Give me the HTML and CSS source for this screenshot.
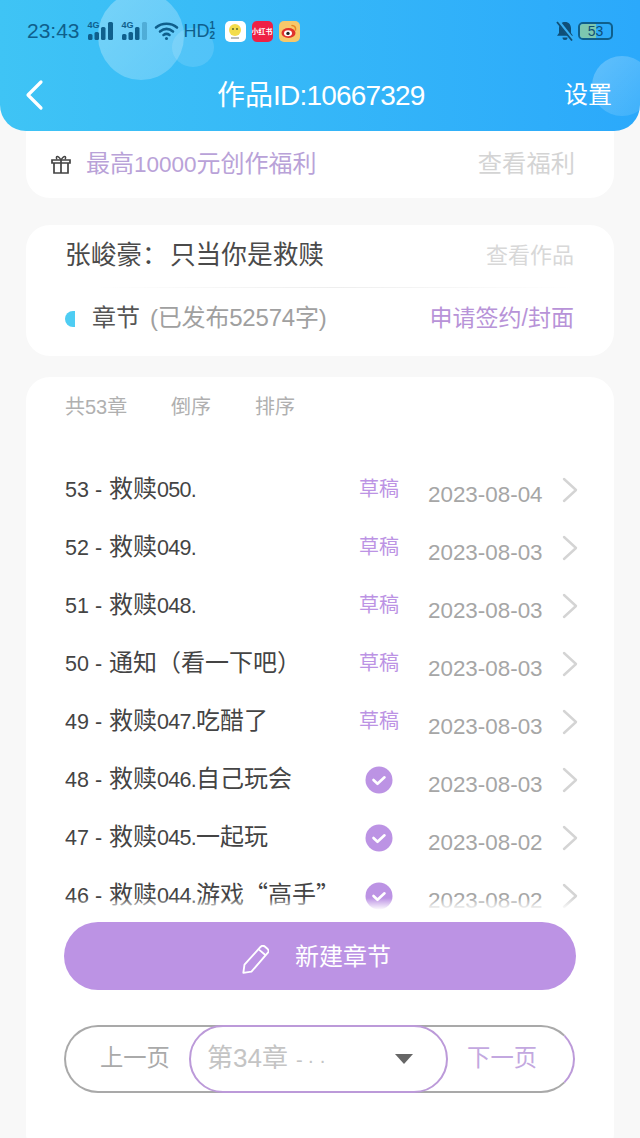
FILE: index.html
```html
<!DOCTYPE html>
<html lang="zh">
<head>
    <meta charset="UTF-8">
    <meta name="viewport" content="width=device-width, initial-scale=1.0">
    <title>作品ID:10667329</title>
    <link rel="stylesheet" href="styles.css">
</head>
<body>
    <div class="page">
        <header class="topbar">
            <span class="bubble bubble-big"></span>
            <span class="bubble bubble-small"></span>
            <span class="bubble bubble-right"></span>
            <div class="status">
                <div class="status-left">
                    <span class="clock">23:43</span>
                    <span class="net"><i class="net-label">4G</i>
                        <svg width="26" height="18" viewBox="0 0 26 18"><rect x="0" y="12" width="4.500" height="6" rx="1.500"/><rect x="6.500" y="10" width="4.500" height="8" rx="1.500"/><rect x="13" y="5" width="4.500" height="13" rx="1.500"/><rect x="20" y="0" width="5" height="18" rx="1.500"/></svg>
                    </span>
                    <span class="net"><i class="net-label">4G</i>
                        <svg width="26" height="18" viewBox="0 0 26 18"><rect x="0" y="12" width="4.500" height="6" rx="1.500"/><rect x="6.500" y="10" width="4.500" height="8" rx="1.500"/><rect x="13" y="5" width="4.500" height="13" rx="1.500"/><rect x="20" y="0" width="5" height="18" rx="1.500" opacity="0.3"/></svg>
                    </span>
                    <svg class="wifi" width="25" height="20" viewBox="0 0 25 20" fill="none" stroke="#0f5f8c" stroke-width="2.600" stroke-linecap="round"><path d="M2 6.500C8 1.500 17 1.500 23 6.500"/><path d="M6 10.500C10 7.300 15 7.300 19 10.500"/><path d="M9.500 14C11.200 12.800 13.800 12.800 15.500 14"/><circle cx="12.500" cy="17.500" r="1.500" fill="#0f5f8c" stroke="none"/></svg>
                    <span class="hd">HD</span>
                    <span class="sim"><i>1</i><i>2</i></span>
                    <span class="app app-qq">
                        <svg width="20" height="20" viewBox="0 0 20 20"><circle cx="10" cy="9" r="6" fill="#f3dc4c"/><circle cx="8" cy="8" r="1" fill="#5b6b2a"/><circle cx="12" cy="8" r="1" fill="#5b6b2a"/><path d="M6 17h8" stroke="#777" stroke-width="1"/></svg>
                    </span>
                    <span class="app app-red">小红书</span>
                    <span class="app app-weibo">
                        <svg width="20" height="20" viewBox="0 0 20 20"><ellipse cx="9.500" cy="12" rx="7" ry="5" fill="#e0332c"/><ellipse cx="9" cy="12.200" rx="4" ry="3" fill="#fff"/><circle cx="9" cy="12.400" r="1.700" fill="#222"/><path d="M13 4.500c2.500 0 4 1.800 3.500 4.500" fill="none" stroke="#e8871e" stroke-width="1.500" stroke-linecap="round"/></svg>
                    </span>
                </div>
                <div class="status-right">
                    <svg width="20" height="20" viewBox="0 0 20 20"><path d="M10 1c3.800 0 6 2.700 6 6.500v4.500l2 2.800H2L4 12V7.500C4 3.700 6.200 1 10 1z" fill="#0f4f78"/><path d="M7.500 16.500h5a2.500 2.500 0 0 1-5 0z" fill="#0f4f78"/><path d="M3 0l15 19" stroke="#36aef2" stroke-width="3.500"/><path d="M2 1l15 18.500" stroke="#0f4f78" stroke-width="1.800"/></svg>
                    <span class="battery"><span class="battery-level"></span><span class="battery-num">53</span></span>
                </div>
            </div>
            <div class="navbar">
                <svg class="back" width="20" height="32" viewBox="0 0 20 32" fill="none" stroke="#fff" stroke-width="3.200" stroke-linecap="round" stroke-linejoin="round"><path d="M17 3L4 16l13 13"/></svg>
                <h1 class="nav-title">作品<span class="nav-id">ID:10667329</span></h1>
                <span class="nav-action">设置</span>
            </div>
        </header>

        <section class="card card-welfare">
            <svg class="gift" width="22" height="22" viewBox="0 0 22 22" fill="none" stroke="#444" stroke-width="1.700"><path d="M2 7h18v3H2zM4 10v10h14V10M11 7v13"/><path d="M11 7C8 2 5 3 7 6.500M11 7c3-5 6-4 4-.5" stroke-width="1.400"/></svg>
            <span class="welfare-text">最高<span class="digits">10000</span>元创作福利</span>
            <span class="link-grey">查看福利</span>
        </section>

        <section class="card card-book">
            <div class="book-row">
                <span class="book-title">张峻豪： 只当你是救赎</span>
                <span class="link-small">查看作品</span>
            </div>
            <div class="book-line"></div>
            <div class="book-row">
                <span class="half-dot"></span>
                <span class="chapter-label">章节</span>
                <span class="chapter-count">(已发布52574字)</span>
                <span class="apply">申请签约/封面</span>
            </div>
        </section>

        <section class="card card-list">
            <div class="list-tools">
                <span class="tool-count">共53章</span>
                <span class="tool-btn">倒序</span>
                <span class="tool-btn">排序</span>
            </div>
            <ul class="chapters" id="chapters"></ul>
            <button class="new-chapter" type="button">
                <svg width="27" height="29" viewBox="3 3 23 25" fill="none" stroke="#fff" stroke-width="1.600" stroke-linejoin="round"><path d="M4 27l1-7L19 4.500c1-1 2.500-1 3.500-.2l2.500 2.200c1 1 1 2.300 0 3.300L11 26z"/><path d="M17.500 7l6 5"/></svg>
                <span class="new-label">新建章节</span>
            </button>
            <div class="pager">
                <span class="pager-prev">上一页</span>
                <div class="pager-select">
                    <span class="pager-current">第34章<span class="pager-more">-··</span></span>
                    <span class="pager-arrow"></span>
                </div>
                <span class="pager-next">下一页</span>
            </div>
        </section>
    </div>

    <script>
        const chapters = [
            ["53", "救赎050.", "草稿", "2023-08-04"],
            ["52", "救赎049.", "草稿", "2023-08-03"],
            ["51", "救赎048.", "草稿", "2023-08-03"],
            ["50", "通知（看一下吧）", "草稿", "2023-08-03"],
            ["49", "救赎047.吃醋了", "草稿", "2023-08-03"],
            ["48", "救赎046.自己玩会", "", "2023-08-03"],
            ["47", "救赎045.一起玩", "", "2023-08-02"],
            ["46", "救赎044.游戏“高手”", "", "2023-08-02"],
        ];

        const checkIcon = '<svg width="28" height="28" viewBox="0 0 28 28"><circle cx="14" cy="14" r="13.500" fill="#bc93e4"/><path d="M8.500 14l4 3.800 7-6.500" fill="none" stroke="#fff" stroke-width="2.600" stroke-linecap="round" stroke-linejoin="round"/></svg>';
        const arrowIcon = '<svg class="row-arrow" width="16" height="26" viewBox="0 0 16 26" fill="none" stroke="#d4d4d4" stroke-width="2.400" stroke-linecap="round" stroke-linejoin="round"><path d="M2 2l12 11L2 24"/></svg>';

        const list = document.getElementById('chapters');
        for (const [num, name, state, date] of chapters) {
            const li = document.createElement('li');
            li.className = 'chapter';
            const status = state ? `<span class="draft">${state}</span>` : checkIcon;
            // the digits in a title are set tighter than the Chinese around them
            const title = name.replace(/[0-9.]+/g, m => `<span class="name-digits">${m}</span>`);
            li.innerHTML = `<span class="chapter-name"><span class="chapter-num">${num} -</span>${title}</span>
                <span class="chapter-state">${status}</span>
                <span class="chapter-date">${date}</span>${arrowIcon}`;
            list.appendChild(li);
        }
    </script>
</body>
</html>
```

FILE: styles.css
```css
* {
    box-sizing: border-box;
}
html, body {
    margin: 0;
    height: 100%;
}
body {
    font-family: "Liberation Sans", "Noto Sans CJK SC", sans-serif;
    background-color: #f8f8f8;
    overflow: hidden;
}
.page {
    height: 1138px;
    overflow: hidden;
}
.topbar {
    position: relative;
    height: 131px;
    padding: 0 26px 0 24px;
    border-radius: 0 0 26px 26px;
    background: linear-gradient(90deg, #3fc4f5 0%, #2ba9fb 100%);
    overflow: hidden;
}
.bubble {
    position: absolute;
    border-radius: 50%;
    background: rgba(255, 255, 255, 0.22);
}
.bubble-big {
    left: 98px;
    top: -8px;
    width: 86px;
    height: 88px;
    background: linear-gradient(135deg, rgba(255,255,255,0.3), rgba(255,255,255,0.2));
}
.bubble-small {
    left: 172px;
    top: 28px;
    width: 42px;
    height: 39px;
    background: rgba(255, 255, 255, 0.13);
}
.bubble-right {
    left: 592px;
    top: 56px;
    width: 60px;
    height: 60px;
    background: linear-gradient(135deg, rgba(255,255,255,0.25), rgba(255,255,255,0.08));
}
.status {
    position: relative;
    display: flex;
    justify-content: space-between;
    align-items: center;
    height: 62px;
    padding-left: 3px;
}
.status-left {
    display: flex;
    align-items: center;
    color: #0f5f8c;
}
.clock {
    font-size: 21px;
    margin-right: 8px;
}
.net {
    position: relative;
    display: flex;
    width: 27px;
    margin-right: 7px;
}
.net + .net {
    margin-right: 5px;
}
.net svg {
    fill: #0f5f8c;
}
.net-label {
    position: absolute;
    left: 0;
    top: -2px;
    font-size: 9px;
    font-weight: bold;
    font-style: normal;
}
.hd {
    font-size: 18px;
    margin-left: 5px;
}
.sim {
    display: flex;
    flex-direction: column;
    width: 9px;
    margin-right: 6px;
    font-size: 10px;
    line-height: 10px;
    font-weight: bold;
}
.sim i {
    font-style: normal;
}
.app {
    display: flex;
    justify-content: center;
    align-items: center;
    width: 21px;
    height: 21px;
    margin-right: 6px;
    border-radius: 5px;
}
.app-qq {
    background-color: #fff;
}
.app-red {
    background-color: #ee2145;
    color: #fff;
    font-size: 7px;
    white-space: nowrap;
    font-weight: bold;
}
.app-weibo {
    background-color: #f7c86a;
}
.status-right {
    display: flex;
    align-items: center;
    gap: 3px;
    margin-right: 1px;
}
.battery {
    position: relative;
    display: flex;
    justify-content: center;
    align-items: center;
    width: 35px;
    height: 18px;
    border: 2px solid #0f5f8c;
    border-radius: 5px;
    overflow: hidden;
}
.battery-level {
    position: absolute;
    left: 0;
    top: 0;
    bottom: 0;
    width: 53%;
    background-color: #7cc7b0;
}
.battery-num {
    position: relative;
    font-size: 14px;
    color: #0f4f78;
}
.navbar {
    position: relative;
    display: flex;
    justify-content: space-between;
    align-items: center;
    height: 66px;
}
.nav-title {
    position: absolute;
    left: 193px;
    margin: 0;
    padding-bottom: 4px;
    font-size: 28px;
    font-weight: normal;
    color: #fff;
    white-space: nowrap;
}
.nav-id {
    letter-spacing: -0.8px;
}
.nav-action {
    margin-right: 2px;
    padding-bottom: 5px;
    font-size: 24px;
    color: #fff;
}
.card {
    margin: 0 26px;
    background-color: #fff;
    border-radius: 24px;
}
.card-welfare {
    display: flex;
    align-items: center;
    height: 67px;
    padding: 0 39px 6px 24px;
    border-radius: 0 0 24px 24px;
}
.gift {
    margin-right: 14px;
    margin-top: 4px;
}
.welfare-text {
    flex: 1;
    font-size: 24px;
    color: #b9a2d8;
}
.digits {
    font-size: 22.500px;
}
.link-grey {
    font-size: 24.300px;
    color: #d4d4d4;
}
.card-book {
    margin-top: 27px;
    height: 131px;
    padding: 0 40px 0 39px;
}
.book-row {
    display: flex;
    align-items: center;
    height: 62px;
    padding-bottom: 7px;
}
.book-title {
    flex: 1;
    font-size: 25.700px;
    word-spacing: -5px;
    color: #4a4a4a;
}
.link-small {
    font-size: 22px;
    color: #d8d8d8;
}
.book-line {
    height: 1px;
    margin: 0 0 0 30px;
    background: linear-gradient(90deg, #fff, #eee 50%, #fff);
}
.half-dot {
    width: 10px;
    height: 16px;
    margin-top: 6px;
    margin-right: 17px;
    border-radius: 8px 0 0 8px;
    background-color: #4ecdf3;
}
.chapter-label {
    font-size: 24px;
    color: #555;
}
.chapter-count {
    flex: 1;
    margin-left: 10px;
    font-size: 24px;
    color: #a0a0a0;
    letter-spacing: -0.200px;
    white-space: nowrap;
}
.apply {
    font-size: 23px;
    color: #b893d8;
    white-space: nowrap;
}
.card-list {
    position: relative;
    height: 780px;
    margin-top: 21px;
    padding: 0 36px 0 38px;
}
.list-tools {
    display: flex;
    align-items: center;
    height: 60px;
    padding: 0 0 4px 1px;
    font-size: 20px;
    color: #b0b0b0;
}
.tool-count {
    width: 106px;
}
.tool-btn {
    width: 84px;
}
.chapters {
    position: relative;
    height: 449px;
    margin: 24px 0 0 1px;
    padding: 0;
    list-style: none;
    overflow: hidden;
}
.chapters::after {
    content: "";
    position: absolute;
    left: 0;
    right: 0;
    bottom: 0;
    height: 12px;
    background: linear-gradient(rgba(255,255,255,0), #fff);
}
.chapter {
    display: flex;
    align-items: center;
    height: 58px;
}
.chapter-name {
    flex: none;
    width: 294px;
    padding-bottom: 8px;
    font-family: "Noto Sans CJK SC", sans-serif;
    font-size: 24px;
    color: #444;
    white-space: nowrap;
}
.chapter-num {
    display: inline-block;
    width: 44px;
    font-family: "Liberation Sans", sans-serif;
    font-size: 21.500px;
}
.name-digits {
    font-family: "Liberation Sans", sans-serif;
    font-size: 21.500px;
    letter-spacing: -0.700px;
}
.chapter-state {
    display: flex;
    justify-content: center;
    flex: none;
    width: 40px;
    font-size: 20px;
    white-space: nowrap;
}
.draft {
    padding-bottom: 6px;
    color: #bc93e4;
}
.chapter-date {
    flex: none;
    width: 134px;
    margin-left: 29px;
    padding-top: 10px;
    font-size: 22.400px;
    color: #a6a6a6;
    white-space: nowrap;
}
.new-chapter {
    display: flex;
    justify-content: center;
    align-items: center;
    gap: 26px;
    width: 512px;
    height: 68px;
    margin-top: 12px;
    padding: 0 7px 0 0;
    border: none;
    border-radius: 34px;
    background-color: #bc93e4;
    color: #fff;
    font-family: inherit;
    font-size: 24px;
}
.new-chapter svg {
    margin-top: 6px;
}
.new-label {
    padding-bottom: 4px;
}
.pager {
    position: relative;
    display: flex;
    justify-content: space-between;
    align-items: center;
    width: 511px;
    height: 68px;
    margin-top: 35px;
    padding: 0 36px 0 34px;
    border: 2px solid #a9a9a9;
    border-right-color: #bc9ad9;
    border-radius: 34px;
    font-size: 23.300px;
}
.pager-prev {
    padding-bottom: 7px;
    color: #aaa;
}
.pager-next {
    padding-bottom: 6px;
    color: #c3a8e0;
}
.pager-select {
    position: absolute;
    left: 123px;
    top: -2px;
    display: flex;
    align-items: center;
    justify-content: space-between;
    width: 259px;
    height: 68px;
    padding: 0 33px 0 16px;
    border: 2px solid #bc9ad9;
    border-radius: 34px;
    background-color: #fff;
}
.pager-current {
    padding-bottom: 8px;
    font-size: 26px;
    color: #c4c4c4;
}
.pager-more {
    margin-left: 8px;
    font-size: 20px;
    letter-spacing: 5px;
}
.pager-arrow {
    width: 0;
    height: 0;
    border-left: 9px solid transparent;
    border-right: 9px solid transparent;
    border-top: 10px solid #666;
}
```
